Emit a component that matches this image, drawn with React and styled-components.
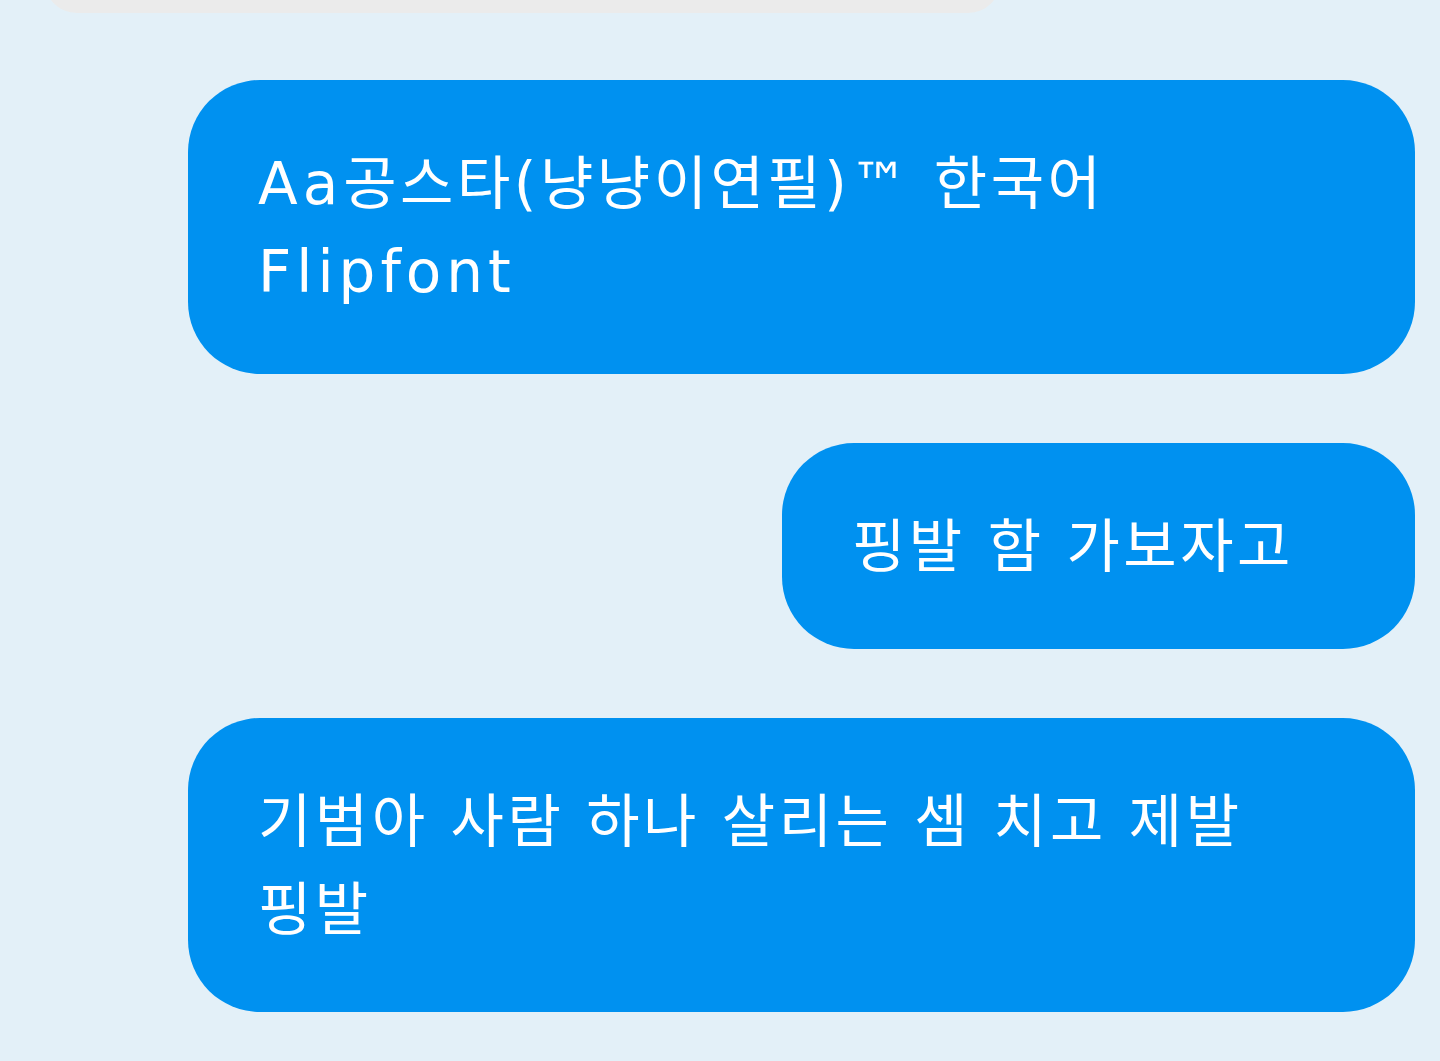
import React from 'react'
import styled, { createGlobalStyle } from 'styled-components'

const Global = createGlobalStyle`
  html, body {
    margin: 0;
    background: #e3f0f8;
  }
`

const Thread = styled.div`
  display: flex;
  flex-direction: column;
  align-items: flex-end;
  gap: 69px;
  padding: 0 25px 0 0;
  min-height: 1061px;
  box-sizing: border-box;
  overflow: hidden;
`

const PrevBubble = styled.div`
  align-self: flex-start;
  margin: -50px 0 -2px 45px;
  width: 955px;
  height: 63px;
  border-radius: 40px;
  background: #ebebeb;
`

const Bubble = styled.div`
  box-sizing: border-box;
  width: ${(p) => p.$width}px;
  padding: 60px 70px 58px 70px;
  border-radius: 72px;
  background: #0091f0;
  color: #fff;
  font-family: "DejaVu Sans", "Noto Sans CJK KR", sans-serif;
  font-size: 58px;
  line-height: 88px;
  letter-spacing: 3.5px;
  white-space: nowrap;
`

const Latin = styled.span`
  letter-spacing: 5px;
`

export default function App() {
  return (
    <>
      <Global />
      <Thread>
        <PrevBubble />
        <Bubble $width={1227}>
          <Latin>Aa</Latin>공스타(냥냥이연필)™ 한국어<br /><Latin>Flipfont</Latin>
        </Bubble>
        <Bubble $width={633}>핑발 함 가보자고</Bubble>
        <Bubble $width={1227}>
          기범아 사람 하나 살리는 셈 치고 제발<br />핑발
        </Bubble>
      </Thread>
    </>
  )
}
